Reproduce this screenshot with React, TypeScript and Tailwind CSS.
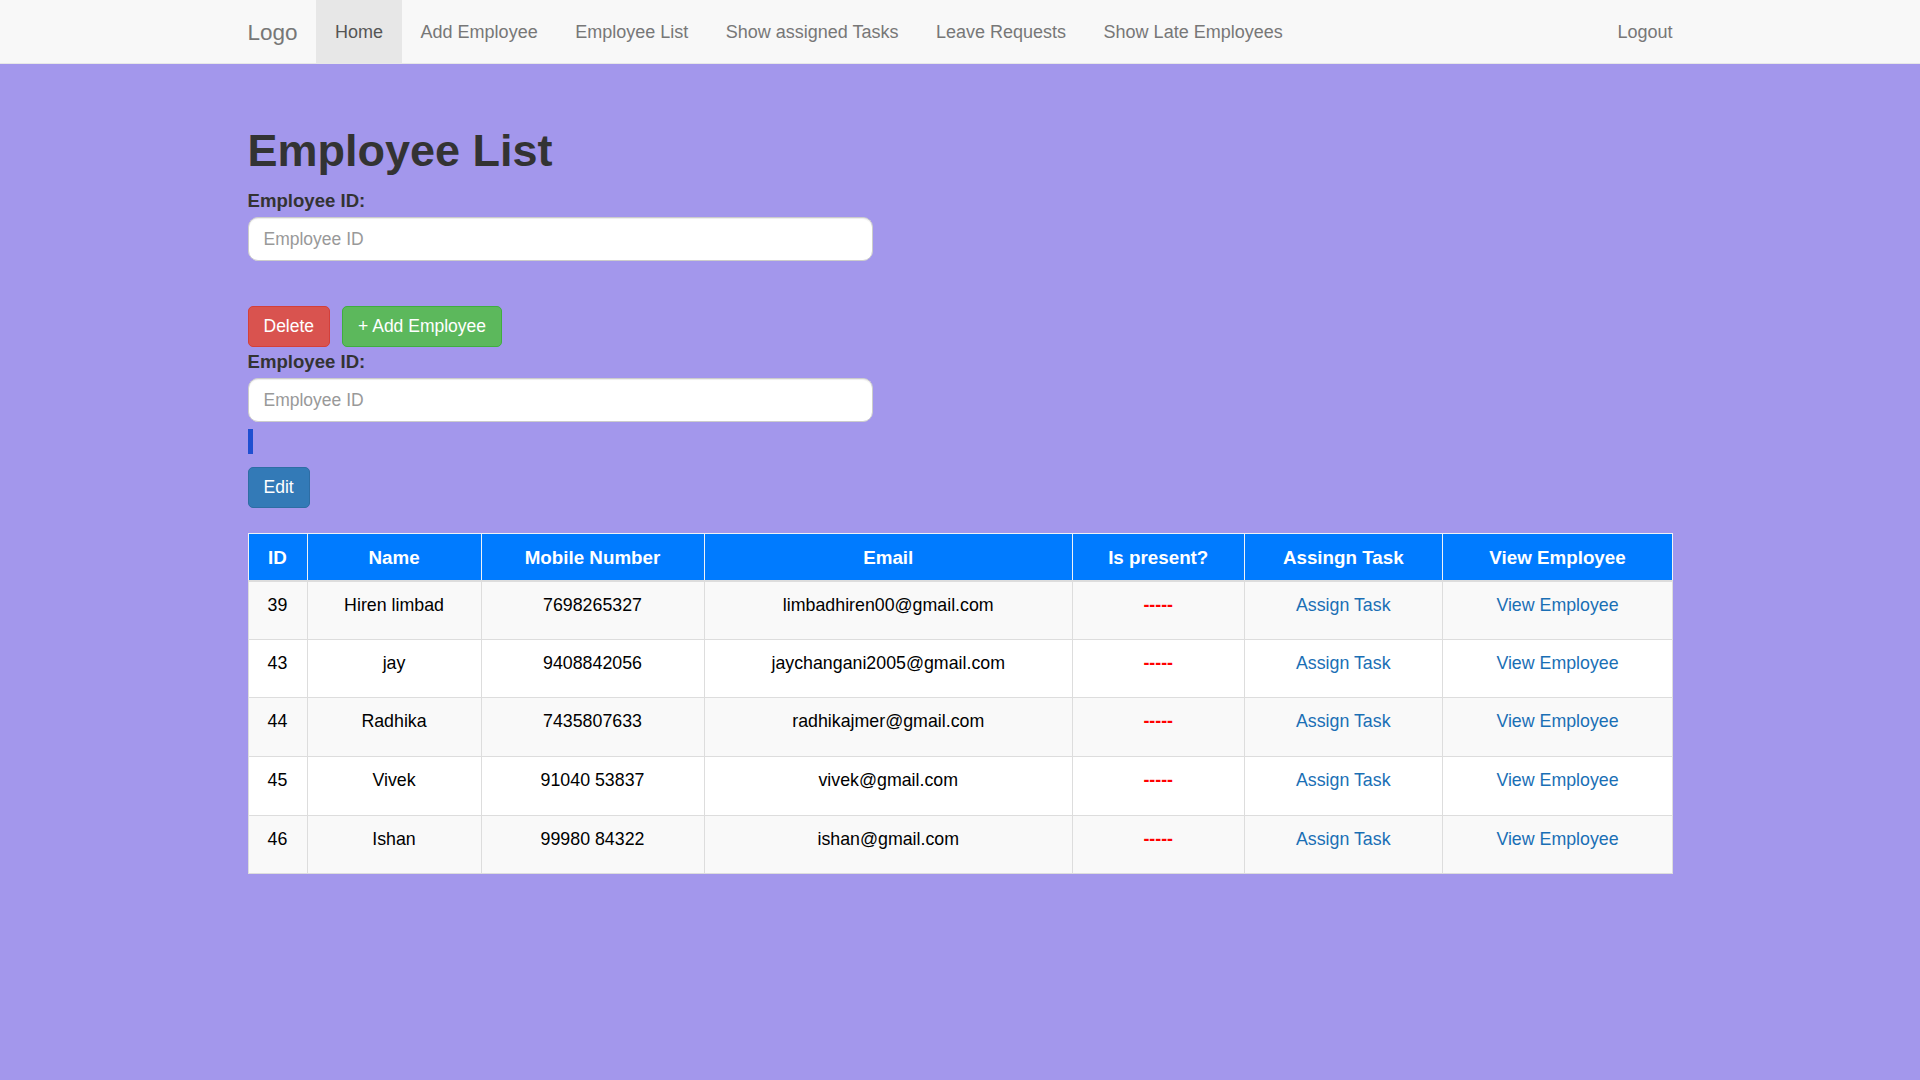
const employees = [
  { id: 39, name: 'Hiren limbad', mobile: '7698265327', email: 'limbadhiren00@gmail.com' },
  { id: 43, name: 'jay', mobile: '9408842056', email: 'jaychangani2005@gmail.com' },
  { id: 44, name: 'Radhika', mobile: '7435807633', email: 'radhikajmer@gmail.com' },
  { id: 45, name: 'Vivek', mobile: '91040 53837', email: 'vivek@gmail.com' },
  { id: 46, name: 'Ishan', mobile: '99980 84322', email: 'ishan@gmail.com' },
];

const navLinks = ['Add Employee', 'Employee List', 'Show assigned Tasks', 'Leave Requests', 'Show Late Employees'];

const Navbar = () => {
  return (
    <nav className="bg-[#f8f8f8] border-b border-[#e7e7e7] h-[63.75px] text-[18px]">
      <div className="w-[1462.5px] mx-auto px-[18.75px] flex items-stretch h-[62.5px]">
        <a href="#" className="ml-[-18.75px] px-[18.75px] pt-[2px] flex items-center text-[22.5px] text-[#777]">
          Logo
        </a>
        <ul className="flex items-stretch">
          <li className="flex">
            <a href="#" className="px-[18.75px] pt-[2px] flex items-center bg-[#e7e7e7] text-[#555]">
              Home
            </a>
          </li>
          {navLinks.map((l) => (
            <li key={l} className="flex">
              <a href="#" className="px-[18.75px] pt-[2px] flex items-center text-[#777]">
                {l}
              </a>
            </li>
          ))}
        </ul>
        <div className="ml-auto mr-[-18.75px] flex">
          <a href="#" className="px-[18.75px] pt-[2px] flex items-center text-[#777]">
            Logout
          </a>
        </div>
      </div>
    </nav>
  );
};

const IdInput = () => (
  <div className="flex flex-col">
    <label className="font-bold text-[#333] text-[18.6px] leading-[25px] mb-[4px]">Employee ID:</label>
    <input
      type="text"
      placeholder="Employee ID"
      className="w-[625px] h-[44px] px-[15px] bg-white border border-[#ccc] rounded-[10px] text-[17.5px] text-[#555] placeholder:text-[#999] shadow-[inset_0_1px_1px_rgba(0,0,0,0.075)] outline-none"
    />
  </div>
);

const Btn = ({ children, className }: { children: React.ReactNode; className: string }) => (
  <button
    className={
      'h-[41px] px-[15px] border-[1.25px] rounded-[5px] text-white text-[17.5px] leading-[25px] ' + className
    }
  >
    {children}
  </button>
);

const App = () => {
  return (
    <div className="min-h-[1080px] bg-[#a397ec] font-['Liberation_Sans',Arial,sans-serif] text-[17.5px] leading-[25px] text-[#333]">
      <Navbar />
      <div className="w-[1462.5px] mx-auto px-[18.75px] pt-[62px] pb-10">
        <h1 className="text-[45px] leading-[49.5px] font-bold text-[#333] mb-[13px]">Employee List</h1>
        <IdInput />

        <div className="flex gap-[12px] mt-[45px]">
          <Btn className="bg-[#d9534f] border-[#d43f3a]">Delete</Btn>
          <Btn className="bg-[#5cb85c] border-[#3fae3f]">+ Add Employee</Btn>
        </div>

        <div className="mt-[2px]">
          <IdInput />
        </div>
        <div className="mt-[7px] w-[5px] h-[25px] bg-[#1f4fd1]" />
        <div className="mt-[13px]">
          <Btn className="bg-[#337ab7] border-[#2e6da4]">Edit</Btn>
        </div>

        <table className="mt-[25px] w-[1425px] table-fixed border-collapse border border-[#ddd] text-[17.8px]">
          <colgroup>
            <col className="w-[59px]" />
            <col className="w-[174px]" />
            <col className="w-[223px]" />
            <col className="w-[368.5px]" />
            <col className="w-[171.5px]" />
            <col className="w-[198.5px]" />
            <col className="w-[230px]" />
          </colgroup>
          <thead>
            <tr className="bg-[#007bff] text-white">
              {['ID', 'Name', 'Mobile Number', 'Email', 'Is present?', 'Assingn Task', 'View Employee'].map((h) => (
                <th
                  key={h}
                  className="h-[47px] border border-[#eef2f7] border-b-2 border-b-[#ddd] font-bold text-[18.8px] text-center align-middle"
                >
                  {h}
                </th>
              ))}
            </tr>
          </thead>
          <tbody>
            {employees.map((e, i) => (
              <tr key={e.id} className={i % 2 === 0 ? 'bg-[#f9f9f9]' : 'bg-white'}>
                <td className="h-[58.6px] border border-[#ddd] text-center align-top pt-[11px] text-black">{e.id}</td>
                <td className="h-[58.6px] border border-[#ddd] text-center align-top pt-[11px] text-black">{e.name}</td>
                <td className="h-[58.6px] border border-[#ddd] text-center align-top pt-[11px] text-black">{e.mobile}</td>
                <td className="h-[58.6px] border border-[#ddd] text-center align-top pt-[11px] text-black">{e.email}</td>
                <td className="h-[58.6px] border border-[#ddd] text-center align-top pt-[11px] text-[#ff0000] font-bold">
                  -----
                </td>
                <td className="h-[58.6px] border border-[#ddd] text-center align-top pt-[11px]">
                  <a href="#" className="text-[#1a6fb5]">
                    Assign Task
                  </a>
                </td>
                <td className="h-[58.6px] border border-[#ddd] text-center align-top pt-[11px]">
                  <a href="#" className="text-[#1a6fb5]">
                    View Employee
                  </a>
                </td>
              </tr>
            ))}
          </tbody>
        </table>
      </div>
    </div>
  );
};

export default App;
